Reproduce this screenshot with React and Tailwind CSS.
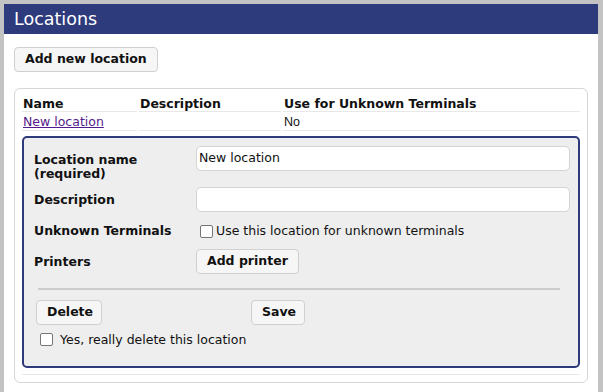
import React from "react";

const font = { fontFamily: '"DejaVu Sans", Verdana, sans-serif' };

function Btn({ children, className = "" }) {
  return (
    <button
      className={
        "h-[25px] px-[10px] border border-[#d0d0d0] rounded-[4px] bg-[#f6f6f6] text-[12.5px] font-bold text-[#111] leading-none " +
        className
      }
    >
      {children}
    </button>
  );
}

function Check({ className = "" }) {
  return (
    <span
      className={
        "inline-block w-[13px] h-[13px] border border-[#767676] rounded-[2px] bg-white shrink-0 " +
        className
      }
    />
  );
}

export default function App() {
  return (
    <div
      className="min-h-[392px] bg-[#c3c3c3] pl-[4px] pt-[4px] pr-[5px] text-[#111]"
      style={font}
    >
      <div className="bg-white min-h-[388px]">
        <div className="h-[30px] bg-[#2d3a7c] text-white text-[17.5px] pl-[10px] flex items-center">
          Locations
        </div>
        <div className="px-[10px] pt-[12px]">
          <Btn className="h-[25px] px-[10px]">Add new location</Btn>
          <div className="mt-[16px] border border-[#d6d6d6] rounded-[6px] px-[7px] pt-[4px] pb-[7px]">
            <div className="grid grid-cols-[115px_142px_1fr] gap-x-[2px] text-[12.5px]">
              <div className="font-bold h-[19px] border-b border-[#e8e8e8] pl-[1px] pt-[3px] leading-[15px]">Name</div>
              <div className="font-bold h-[19px] border-b border-[#e8e8e8] pl-[1px] pt-[3px] leading-[15px]">Description</div>
              <div className="font-bold h-[19px] border-b border-[#e8e8e8] pl-[1px] pt-[3px] leading-[15px]">Use for Unknown Terminals</div>
              <div className="h-[19px] border-b border-[#e8e8e8] pl-[1px] pt-[2px] leading-[16px]">
                <a href="#" className="text-[#551a8b] underline">New location</a>
              </div>
              <div className="h-[19px] border-b border-[#e8e8e8]" />
              <div
                className="h-[19px] border-b border-[#e8e8e8] pl-[1px] pt-[2px] leading-[16px]"
                style={{ fontFamily: '"Liberation Sans", Arial, sans-serif' }}
              >
                No
              </div>
              <div className="col-span-3 pt-[5px] pb-[6px] border-b border-[#e8e8e8]">
                <div className="border-2 border-[#2d3a7c] rounded-[5px] bg-[#eeeeee] pl-[8px] pr-[8px] pt-[8px] pb-[17px] text-[12.5px]">
                  <div className="grid grid-cols-[164px_1fr] items-start">
                    <div className="font-bold leading-[14px] pt-[7px] pl-[2px]">
                      Location name
                      <br />
                      (required)
                    </div>
                    <div className="h-[25px] bg-white border border-[#d4d4d4] rounded-[5px] px-[2px] flex items-center">
                      New location
                    </div>
                  </div>
                  <div className="grid grid-cols-[164px_1fr] items-center mt-[6px]">
                    <div className="font-bold pl-[2px] pt-[3px]">Description</div>
                    <div className="h-[25px] bg-white border border-[#d4d4d4] rounded-[5px]" />
                  </div>
                  <div className="grid grid-cols-[164px_1fr] items-center mt-[10px]">
                    <div className="font-bold pl-[2px]">Unknown Terminals</div>
                    <div className="flex items-center pl-[4px] gap-[3px]">
                      <Check />
                      <span>Use this location for unknown terminals</span>
                    </div>
                  </div>
                  <div className="grid grid-cols-[164px_1fr] items-center mt-[8px]">
                    <div className="font-bold pl-[2px] pt-[2px]">Printers</div>
                    <div>
                      <Btn className="h-[25px] px-[10px]">Add printer</Btn>
                    </div>
                  </div>
                  <div className="ml-[6px] mt-[14px] h-[2px] bg-[#cccccc] mr-[10px]" />
                  <div className="flex mt-[10px] pl-[4px]">
                    <Btn className="w-[66px] px-0">Delete</Btn>
                    <Btn className="ml-[149px] w-[54px] px-0">Save</Btn>
                  </div>
                  <div className="flex items-center mt-[6px] pl-[8px] gap-[7px]">
                    <Check />
                    <span>Yes, really delete this location</span>
                  </div>
                </div>
              </div>
            </div>
          </div>
        </div>
      </div>
    </div>
  );
}
